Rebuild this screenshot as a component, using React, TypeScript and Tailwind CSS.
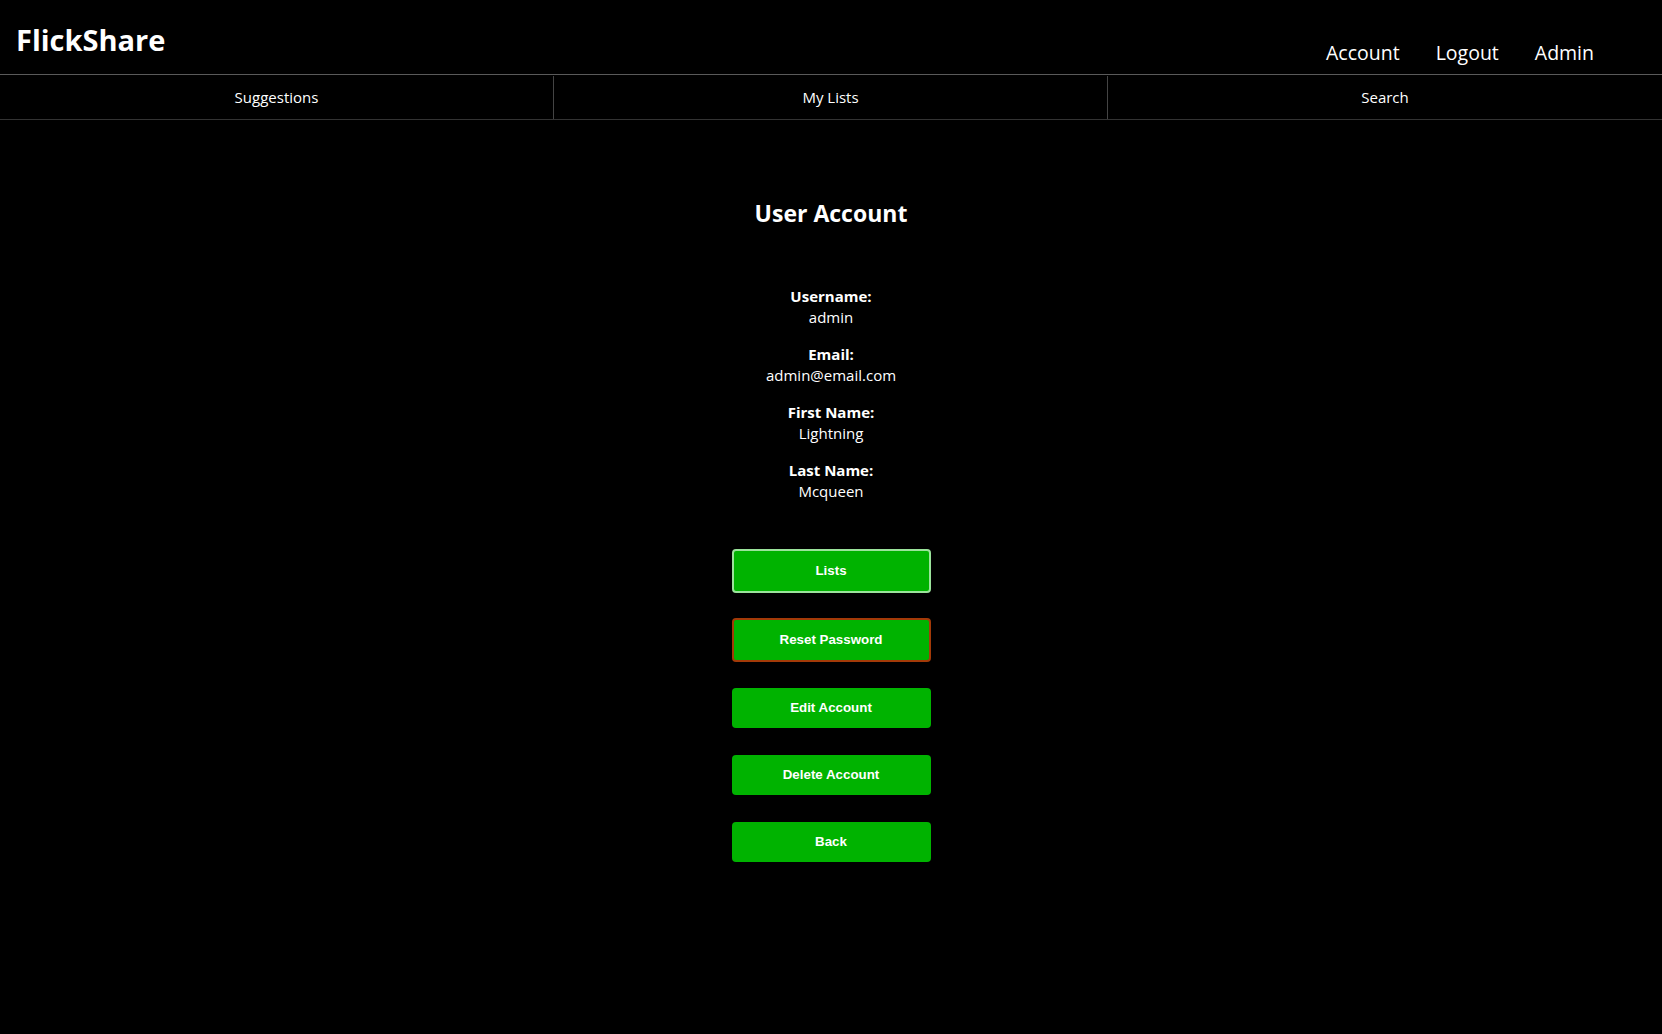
import React from "react";

export default function App() {
  const fields = [
    ["Username:", "admin"],
    ["Email:", "admin@email.com"],
    ["First Name:", "Lightning"],
    ["Last Name:", "Mcqueen"],
  ];
  const btn =
    "w-[199px] rounded-[4px] bg-[#00b300] text-white text-[13.33px] font-bold font-['Liberation_Sans',Arial,sans-serif]";
  return (
    <div className="min-h-[1034px] w-full bg-black text-white font-['Open_Sans','Noto_Sans',sans-serif]">
      <header className="h-[75px] border-b border-[#5a5a5a] flex items-start justify-between">
        <div className="pl-4 pt-[20px] text-[29px] font-bold leading-[40px]">FlickShare</div>
        <nav className="flex gap-[36px] pr-[68px] pt-[39px] text-[19.5px] leading-[28px]">
          <a>Account</a>
          <a>Logout</a>
          <a>Admin</a>
        </nav>
      </header>
      <div className="grid grid-cols-3 h-[45px] border-b border-[#333] text-[15px] pt-[1px]">
        <div className="flex items-center justify-center border-r border-[#444]">Suggestions</div>
        <div className="flex items-center justify-center border-r border-[#444]">My Lists</div>
        <div className="flex items-center justify-center">Search</div>
      </div>
      <main className="flex flex-col items-center pt-[77px]">
        <h1 className="text-[23px] font-bold leading-[32px]">User Account</h1>
        <div className="mt-[57px] flex flex-col items-center gap-[16px] text-[15px] leading-[21px]">
          {fields.map(([l, v]) => (
            <div key={l} className="flex flex-col items-center">
              <span className="font-bold">{l}</span>
              <span>{v}</span>
            </div>
          ))}
        </div>
        <div className="mt-[47px] flex flex-col items-center">
          <button className={btn + " h-[44px] border-2 border-[#9be39b]"}>Lists</button>
          <button className={btn + " mt-[25px] h-[44px] border-2 border-[#a33a08]"}>Reset Password</button>
          <button className={btn + " mt-[26px] h-[40px]"}>Edit Account</button>
          <button className={btn + " mt-[27px] h-[40px]"}>Delete Account</button>
          <button className={btn + " mt-[27px] h-[40px]"}>Back</button>
        </div>
      </main>
    </div>
  );
}
